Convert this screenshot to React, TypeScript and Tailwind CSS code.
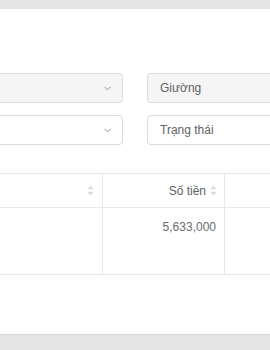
import { ChevronDown } from "lucide-react";

function SortIcon() {
  return (
    <svg width="7" height="11" viewBox="0 0 7 11" className="shrink-0">
      <path d="M3.5 0.5 L6.5 4.2 L0.5 4.2 Z" fill="#d9d9d9" />
      <path d="M3.5 10.5 L6.5 6.8 L0.5 6.8 Z" fill="#d9d9d9" />
    </svg>
  );
}

function SelectBox({ disabled }: { disabled?: boolean }) {
  return (
    <div
      className={`h-[30px] flex items-center justify-end pr-[9px] border border-[#dadada] rounded-[4px] ${
        disabled ? "bg-[#f5f5f5]" : "bg-white"
      }`}
    >
      <ChevronDown size={11} strokeWidth={1.8} className="text-[#808080]" />
    </div>
  );
}

function TextBox({ label, disabled }: { label: string; disabled?: boolean }) {
  return (
    <div
      className={`h-[30px] flex items-center pl-[12px] border border-[#dadada] rounded-[4px] text-[12px] text-[#606266] ${
        disabled ? "bg-[#f5f5f5]" : "bg-white"
      }`}
    >
      {label}
    </div>
  );
}

export default function App() {
  return (
    <div
      className="w-[270px] h-[350px] overflow-hidden flex flex-col bg-white"
      style={{ fontFamily: '"Liberation Sans", Arial, sans-serif' }}
    >
      <div className="h-[9px] bg-[#e4e4e4] shrink-0" />

      <div className="flex-1 -ml-[100px] w-[480px] flex flex-col">
        {/* filters */}
        <div className="mt-[64px] grid grid-cols-[223px_200px] gap-x-[24px] gap-y-[12px]">
          <SelectBox disabled />
          <TextBox label="Giường" disabled />
          <SelectBox />
          <TextBox label="Trạng thái" />
        </div>

        {/* table */}
        <div className="mt-[28px] border-t border-b border-[#e8e8e8]">
          <div className="flex h-[34px] border-b border-[#e8e8e8] text-[12px] text-[#606266]">
            <div className="w-[203px] flex items-center justify-end pr-[8px] border-r border-[#e8e8e8]">
              <SortIcon />
            </div>
            <div className="w-[122px] flex items-center justify-end gap-[4px] pr-[7px] border-r border-[#e8e8e8]">
              <span>Số tiền</span>
              <SortIcon />
            </div>
            <div className="flex-1" />
          </div>
          <div className="flex h-[66px] text-[12px] text-[#6b6b6b]">
            <div className="w-[203px] border-r border-[#e8e8e8]" />
            <div className="w-[122px] flex justify-end pr-[8px] pt-[10px] border-r border-[#e8e8e8]">
              5,633,000
            </div>
            <div className="flex-1" />
          </div>
        </div>
      </div>

      <div className="h-[16px] bg-[#e4e4e4] border-t border-[#d6d6d6] shrink-0" />
    </div>
  );
}
